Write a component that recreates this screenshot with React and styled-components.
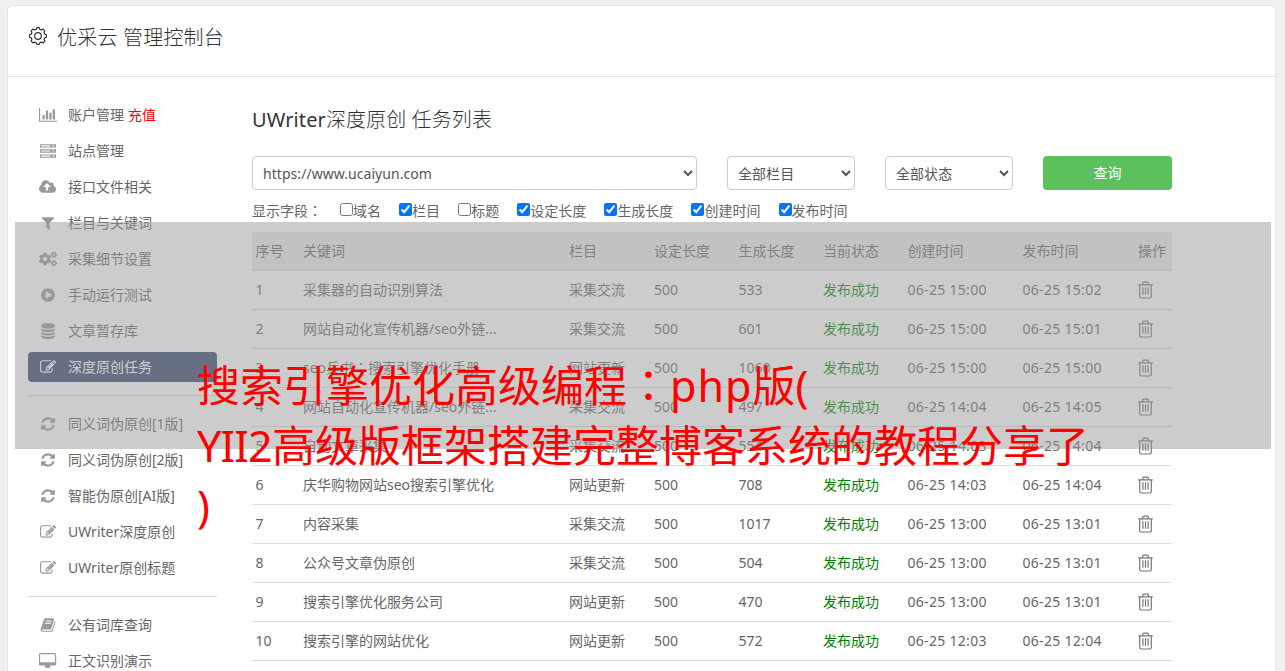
import React from "react";
import styled, { createGlobalStyle } from "styled-components";
import { FaCogs } from "react-icons/fa";

const GlobalStyle = createGlobalStyle`
  * {
    box-sizing: border-box;
  }
  body {
    margin: 0;
    background: #f0f0f0;
    overflow: hidden;
    color: #666;
    font-family: "Noto Sans", "Noto Sans CJK SC", sans-serif;
    font-size: 14px;
    line-height: 20px;
  }
`;

const Page = styled.div`
  position: relative;
  height: 671px;
  padding: 5px 9px 0 7px;
  overflow: hidden;
`;

const Panel = styled.div`
  height: 700px;
  background: white;
  border: 1px solid #e4e4e4;
  border-radius: 5px;
`;

const Header = styled.div`
  display: flex;
  align-items: center;
  height: 71px;
  padding: 0 0 9px 20px;
  border-bottom: 1px solid #e4e4e4;
  color: #333;
  svg {
    margin-bottom: 2px;
  }
`;

const HeaderTitle = styled.h1`
  margin: 2px 0 0 9px;
  font-size: 20px;
  font-weight: 300;
  line-height: 30px;
  letter-spacing: 0.2px;
`;

const Body = styled.div`
  display: flex;
  padding: 23px 0 0 20px;
`;

const Sidebar = styled.div`
  width: 189px;
  margin-right: 35px;
  flex-shrink: 0;
`;

const MenuItem = styled.div`
  display: flex;
  align-items: center;
  height: 30px;
  margin-bottom: 6px;
  padding-left: 10px;
  border-radius: 4px;
  white-space: nowrap;
  color: ${props => (props.$active ? "white" : "#666")};
  background: ${props => (props.$active ? "#35466a" : "none")};
  svg {
    color: ${props => (props.$active ? "white" : "#999")};
  }
`;

const MenuIcon = styled.span`
  display: flex;
  justify-content: center;
  width: 20px;
  margin-right: 10px;
`;

const Recharge = styled.span`
  margin-left: 4px;
  color: red;
`;

const Divider = styled.div`
  height: 1px;
  margin: 13px 0;
  background: #ddd;
`;

const Content = styled.div`
  width: 920px;
`;

const Title = styled.h2`
  margin: 5px 0 21px;
  font-size: 20px;
  font-weight: 300;
  line-height: 30px;
  letter-spacing: 0.1px;
  color: #333;
`;

const Brand = styled.span`
  font-weight: 400;
`;

const Filters = styled.div`
  display: flex;
  gap: 30px;
`;

const Select = styled.select`
  width: ${props => props.$width}px;
  height: 34px;
  padding: 0 6px;
  border: 1px solid #ccc;
  border-radius: 4px;
  background: white;
  color: #555;
  font: inherit;
  letter-spacing: 0.05px;
`;

const Search = styled.button`
  width: 129px;
  height: 34px;
  padding: 0;
  border: 0;
  border-radius: 4px;
  background: #5cc05c;
  color: white;
  font: inherit;
`;

const Fields = styled.div`
  display: flex;
  height: 42px;
  padding-top: 11px;
`;

const FieldsLabel = styled.span`
  width: 88px;
`;

const Field = styled.label`
  display: flex;
  margin-right: 18.1px;
  input {
    width: 13px;
    height: 13px;
    margin: 2px 0 0;
  }
`;

const Row = styled.div`
  display: grid;
  grid-template-columns: 47.5px 266px 85px 84.5px 84.5px 84.5px 115px 115.5px 1fr;
  align-items: center;
  height: 39px;
  padding-left: 3.5px;
  border-bottom: 1px solid #ddd;
  white-space: nowrap;
  background: ${props => (props.$head ? "#ebebeb" : "none")};
`;

const Status = styled.span`
  color: #008000;
`;

const Time = styled.span`
  letter-spacing: 0.3px;
`;

const Shade = styled.div`
  position: absolute;
  left: 15px;
  top: 222px;
  width: 1256px;
  height: 227px;
  background: rgba(153, 153, 153, 0.5);
`;

const Caption = styled.div`
  position: absolute;
  left: 197px;
  top: 356px;
  font-size: 43px;
  line-height: 60px;
  color: red;
  white-space: nowrap;
`;

const Latin = styled.span`
  letter-spacing: ${props => props.$spacing}px;
`;

// the traditional face sets the full-width colon in the middle of its cell
const Colon = styled.span`
  font-family: "Noto Sans CJK TC", sans-serif;
  line-height: 1;
`;

const icons = {
  chart: {
    box: "0 0 2048 1792",
    d: "M640 896v512h-256v-512h256zm384-512v1024h-256v-1024h256zm1024 1152v128h-2048v-1536h128v1408h1920zm-640-896v768h-256v-768h256zm384-384v1152h-256v-1152h256z"
  },
  server: {
    box: "0 0 1792 1792",
    d: "M0 128h1792v384h-1792zM128 256v128h1024v-128zM1408 256v128h192v-128zM0 704h1792v384h-1792zM128 832v128h1024v-128zM1408 832v128h192v-128zM0 1280h1792v384h-1792zM128 1408v128h1024v-128zM1408 1408v128h192v-128z"
  },
  upload: {
    box: "-64 0 1920 1792",
    d: "M1216 864q0-14-9-23l-352-352q-9-9-23-9t-23 9l-351 351q-10 12-10 24 0 14 9 23t23 9h224v352q0 13 9.5 22.5t22.5 9.5h192q13 0 22.5-9.5t9.5-22.5v-352h224q13 0 22.5-9.5t9.5-22.5zm640 288q0 159-112.5 271.5t-271.5 112.5h-1088q-185 0-316.5-131.5t-131.5-316.5q0-130 70-240t188-165q-2-30-2-43 0-212 150-362t362-150q156 0 285.5 87t188.5 231q71-62 166-62 106 0 181 75t75 181q0 76-41 138 130 31 213.5 135.5t83.5 238.5z"
  },
  filter: {
    box: "0 0 1792 1792",
    d: "M1595 295q17 41-14 70l-493 493v742q0 42-39 59-13 5-25 5-27 0-45-19l-256-256q-19-19-19-45v-486l-493-493q-31-29-14-70 17-39 59-39h1280q42 0 59 39z"
  },
  play: {
    box: "0 0 1792 1792",
    d: "M896 128q209 0 385.5 103t279.5 279.5 103 385.5-103 385.5-279.5 279.5-385.5 103-385.5-103-279.5-279.5-103-385.5 103-385.5 279.5-279.5 385.5-103zm384 823q32-18 32-55t-32-55l-544-320q-31-19-64-1-32 19-32 56v640q0 37 32 56 16 8 32 8 17 0 32-9z"
  },
  database: {
    box: "0 0 1792 1792",
    d: "M896 768q237 0 443-43t325-127v170q0 69-103 128t-280 93.5-385 34.5-385-34.5-280-93.5-103-128v-170q119 84 325 127t443 43zm0 768q237 0 443-43t325-127v170q0 69-103 128t-280 93.5-385 34.5-385-34.5-280-93.5-103-128v-170q119 84 325 127t443 43zm0-384q237 0 443-43t325-127v170q0 69-103 128t-280 93.5-385 34.5-385-34.5-280-93.5-103-128v-170q119 84 325 127t443 43zm0-1152q208 0 385 34.5t280 93.5 103 128v128q0 69-103 128t-280 93.5-385 34.5-385-34.5-280-93.5-103-128v-128q0-69 103-128t280-93.5 385-34.5z"
  },
  edit: {
    box: "0 0 1792 1792",
    d: "M888 1184l116-116-152-152-116 116v56h96v96h56zm440-720q-16-16-33 1l-350 350q-17 17-1 33t33-1l350-350q17-17 1-33zm80 594v190q0 119-84.5 203.5t-203.5 84.5h-832q-119 0-203.5-84.5t-84.5-203.5v-832q0-119 84.5-203.5t203.5-84.5h832q63 0 117 25 15 7 18 23 3 17-9 29l-49 49q-14 14-32 8-23-6-45-6h-832q-66 0-113 47t-47 113v832q0 66 47 113t113 47h832q66 0 113-47t47-113v-126q0-13 9-22l64-64q15-15 35-7t20 29zm-96-738l288 288-672 672h-288v-288zm444 132l-92 92-288-288 92-92q28-28 68-28t68 28l152 152q28 28 28 68t-28 68z"
  },
  refresh: {
    box: "0 0 1792 1792",
    d: "M1639 1056q0 5-1 7-64 268-268 434.5t-478 166.5q-146 0-282.5-55t-243.5-157l-129 129q-19 19-45 19t-45-19-19-45v-448q0-26 19-45t45-19h448q26 0 45 19t19 45-19 45l-137 137q71 66 161 102t187 36q134 0 250-65t186-179q11-17 53-117 8-23 30-23h192q13 0 22.5 9.5t9.5 22.5zm25-800v448q0 26-19 45t-45 19h-448q-26 0-45-19t-19-45 19-45l138-138q-148-137-349-137-134 0-250 65t-186 179q-11 17-53 117-8 23-30 23h-199q-13 0-22.5-9.5t-9.5-22.5v-7q65-268 270-434.5t480-166.5q146 0 284 55.5t245 156.5l130-129q19-19 45-19t45 19 19 45z"
  },
  book: {
    box: "0 0 1792 1792",
    d: "M1703 478q40 57 18 129l-275 906q-19 64-76.5 107.5t-122.5 43.5h-923q-77 0-148.5-53.5t-99.5-131.5q-24-67-2-127 0-4 3-27t4-37q1-8-3-21.5t-3-19.5q2-11 8-21t16.5-23.5 16.5-23.5q23-38 45-91.5t30-91.5q3-10 .5-30t-.5-28q3-11 17-28t17-23q21-36 42-92t25-90q1-9-2.5-32t.5-28q4-13 22-30.5t22-22.5q19-26 42.5-84.5t27.5-96.5q1-8-3-25.5t-2-26.5q2-8 9-18t18-23 17-21q8-12 16.5-30.5t15-35 16-36 19.5-32 26.5-23.5 36-11.5 47.5 5.5l-1 3q38-9 51-9h761q74 0 114 56t18 130l-274 906q-36 119-71.5 153.5t-128.5 34.5h-869q-27 0-38 15-11 16-1 43 24 70 144 70h923q29 0 56-15.5t35-41.5l300-987q7-22 5-57 38 15 59 43zm-1064 2q-4 13 2 22.5t20 9.5h608q13 0 25.5-9.5t16.5-22.5l21-64q4-13-2-22.5t-20-9.5h-608q-13 0-25.5 9.5t-16.5 22.5zm-83 256q-4 13 2 22.5t20 9.5h608q13 0 25.5-9.5t16.5-22.5l21-64q4-13-2-22.5t-20-9.5h-608q-13 0-25.5 9.5t-16.5 22.5z"
  },
  desktop: {
    box: "-64 0 1920 1792",
    d: "M1728 992v-832q0-13-9.5-22.5t-22.5-9.5h-1600q-13 0-22.5 9.5t-9.5 22.5v832q0 13 9.5 22.5t22.5 9.5h1600q13 0 22.5-9.5t9.5-22.5zm128-832v1088q0 66-47 113t-113 47h-544q0 37 16 77.5t32 71 16 43.5q0 26-19 45t-45 19h-512q-26 0-45-19t-19-45q0-14 16-44t32-70 16-78h-544q-66 0-113-47t-47-113v-1088q0-66 47-113t113-47h1600q66 0 113 47t47 113z"
  }
};

const Icon = ({ name }) => {
  if (name === "cogs") return <FaCogs size={18} />;
  const { box, d } = icons[name];
  return (
    <svg height="16" viewBox={box} fill="currentColor" fillRule="evenodd">
      <path d={d} />
    </svg>
  );
};

const Gear = () => (
  <svg width="20" height="20" viewBox="0 0 20 20" fill="none" stroke="#333" strokeWidth="1.2">
    <circle cx="10" cy="10" r="3.3" />
    <path
      strokeLinejoin="round"
      d="M8.3 3.2L8.8 1.6H11.2L11.7 3.2L13.2 3.9L14.9 3.1L16.7 4.9L16 6.6L16.7 8.1L18.4 8.8V11.2L16.8 11.8L16.1 13.4L16.9 15.1L15.1 16.9L13.4 16.1L11.8 16.8L11.2 18.4H8.8L8.2 16.8L6.6 16.1L4.9 16.9L3.1 15.1L3.9 13.4L3.2 11.8L1.6 11.2V8.8L3.2 8.2L3.9 6.6L3.1 4.9L4.9 3.1L6.6 3.9Z"
    />
  </svg>
);

const Trash = () => (
  <svg width="16" height="18" viewBox="0 0 16 18" fill="none" stroke="#777" strokeWidth="1.2">
    <path d="M.2 3.9H14.8M4.8 3.8V2.2Q4.8 1.2 5.8 1.2H9.4Q10.4 1.2 10.4 2.2V3.8" />
    <path d="M1.7 4V15.6Q1.7 17 3.1 17H11.9Q13.3 17 13.3 15.6V4" />
    <path d="M4.9 6.3V13.8M7.5 6.3V13.8M10.1 6.3V13.8" />
  </svg>
);

const menu = [
  ["chart", "账户管理"],
  ["server", "站点管理"],
  ["upload", "接口文件相关"],
  ["filter", "栏目与关键词"],
  ["cogs", "采集细节设置"],
  ["play", "手动运行测试"],
  ["database", "文章暂存库"],
  ["edit", "深度原创任务"],
  null,
  ["refresh", "同义词伪原创[1版]"],
  ["refresh", "同义词伪原创[2版]"],
  ["refresh", "智能伪原创[AI版]"],
  ["edit", "UWriter深度原创"],
  ["edit", "UWriter原创标题"],
  null,
  ["book", "公有词库查询"],
  ["desktop", "正文识别演示"]
];

const fields = [
  ["域名", false],
  ["栏目", true],
  ["标题", false],
  ["设定长度", true],
  ["生成长度", true],
  ["创建时间", true],
  ["发布时间", true]
];

const heads = ["序号", "关键词", "栏目", "设定长度", "生成长度", "当前状态", "创建时间", "发布时间", "操作"];

const tasks = [
  ["采集器的自动识别算法", "采集交流", 533, "15:00", "15:02"],
  ["网站自动化宣传机器/seo外链...", "采集交流", 601, "15:00", "15:01"],
  [<>seo兵书<Colon>：</Colon>搜索引擎优化手册</>, "网站更新", 1060, "15:00", "15:00"],
  ["网站自动化宣传机器/seo外链...", "采集交流", 497, "14:04", "14:05"],
  ["自动文章采集", "采集交流", 554, "14:03", "14:04"],
  ["庆华购物网站seo搜索引擎优化", "网站更新", 708, "14:03", "14:04"],
  ["内容采集", "采集交流", 1017, "13:00", "13:01"],
  ["公众号文章伪原创", "采集交流", 504, "13:00", "13:01"],
  ["搜索引擎优化服务公司", "网站更新", 470, "13:00", "13:01"],
  ["搜索引擎的网站优化", "网站更新", 572, "12:03", "12:04"]
];

export default () => (
  <React.Fragment>
    <GlobalStyle />
    <Page>
      <Panel>
        <Header>
          <Gear />
          <HeaderTitle>优采云 管理控制台</HeaderTitle>
        </Header>
        <Body>
          <Sidebar>
            {menu.map((item, i) =>
              item ? (
                <MenuItem key={i} $active={item[1] === "深度原创任务"}>
                  <MenuIcon>
                    <Icon name={item[0]} />
                  </MenuIcon>
                  {item[1]}
                  {i === 0 && <Recharge>充值</Recharge>}
                </MenuItem>
              ) : (
                <Divider key={i} />
              )
            )}
          </Sidebar>
          <Content>
            <Title>
              <Brand>UWriter</Brand>深度原创 任务列表
            </Title>
            <Filters>
              <Select $width={445}>
                <option>https://www.ucaiyun.com</option>
              </Select>
              <Select $width={128}>
                <option>全部栏目</option>
              </Select>
              <Select $width={128}>
                <option>全部状态</option>
              </Select>
              <Search>查询</Search>
            </Filters>
            <Fields>
              <FieldsLabel>
                显示字段<Colon>：</Colon>
              </FieldsLabel>
              {fields.map(([label, checked]) => (
                <Field key={label}>
                  <input type="checkbox" defaultChecked={checked} />
                  {label}
                </Field>
              ))}
            </Fields>
            <Row $head>
              {heads.map(head => (
                <span key={head}>{head}</span>
              ))}
            </Row>
            {tasks.map(([keyword, column, length, created, published], i) => (
              <Row key={i}>
                <span>{i + 1}</span>
                <span>{keyword}</span>
                <span>{column}</span>
                <span>500</span>
                <span>{length}</span>
                <Status>发布成功</Status>
                <Time>06-25 {created}</Time>
                <Time>06-25 {published}</Time>
                <Trash />
              </Row>
            ))}
          </Content>
        </Body>
      </Panel>
      <Shade />
      <Caption>
        搜索引擎优化高级编程<Colon>：</Colon>
        <Latin $spacing={1}>php</Latin>版(
        <br />
        <Latin $spacing={-0.8}>YII2</Latin>高级版框架搭建完整博客系统的教程分享了
        <br />)
      </Caption>
    </Page>
  </React.Fragment>
);
